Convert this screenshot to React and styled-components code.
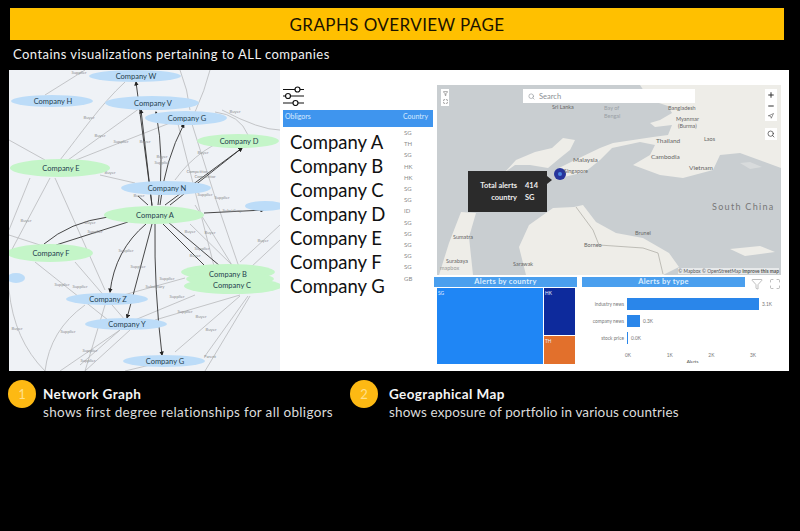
import React from 'react';
import styled, { createGlobalStyle } from 'styled-components';
import { Search, Plus, Minus, Navigation, Filter, Maximize } from 'lucide-react';

const GlobalStyle = createGlobalStyle`
  html, body { margin: 0; padding: 0; background: #000; }
  body { font-family: 'Lato', 'Liberation Sans', sans-serif; }
`;

const Page = styled.div`
  width: 800px;
  height: 531px;
  background: #000;
  overflow: hidden;
  padding: 8px 11px 0 9px;
  box-sizing: border-box;
`;

const Banner = styled.h1`
  margin: 0 5px 0 1px;
  height: 32px;
  background: #ffc000;
  color: #1a1300;
  font-size: 17px;
  font-weight: 400;
  line-height: 33px;
  text-align: center;
  letter-spacing: 0.4px;
`;

const Subtitle = styled.p`
  margin: 0;
  height: 30px;
  padding-left: 4px;
  color: #f2f2f2;
  font-size: 13px;
  line-height: 28px;
  letter-spacing: 0.45px;
`;

const Panel = styled.section`
  display: flex;
  height: 301px;
  background: #fff;
`;

const GraphBox = styled.div`
  width: 271px;
  flex: none;
  background: #eff2f6;
  svg { display: block; }
`;

const Obligors = styled.div`
  width: 156px;
  flex: none;
  padding: 16px 3px 0;
  box-sizing: border-box;
  > svg { display: block; }
`;

const TableHead = styled.div`
  display: flex;
  justify-content: space-between;
  height: 16px;
  margin-top: 4px;
  padding: 1px 5px 0 2px;
  background: #3f95ee;
  color: #d8eaff;
  font-size: 7px;
  line-height: 10px;
`;

const TableBody = styled.div`
  display: flex;
  justify-content: space-between;
`;

const Names = styled.ul`
  list-style: none;
  margin: 3px 0 0;
  padding: 0 0 0 7px;
  color: #111;
  font-size: 18.5px;
  line-height: 24px;
`;

const Countries = styled.ul`
  list-style: none;
  width: 29px;
  margin: 0;
  padding: 0;
  color: #8a8a8a;
  font-size: 6px;
  line-height: 11.2px;
`;

const Dash = styled.div`
  flex: 1;
  display: flex;
  flex-direction: column;
  padding: 15px 8px 0 0;
  min-width: 0;
`;

const MapBox = styled.div`
  position: relative;
  flex: none;
  height: 190px;
  margin-left: 1px;
  overflow: hidden;
  background: #c9ced1;
  svg.map { display: block; }
`;

const SearchBar = styled.div`
  position: absolute;
  left: 86px;
  top: 4px;
  width: 172px;
  height: 14px;
  display: flex;
  align-items: center;
  gap: 4px;
  padding-left: 5px;
  box-sizing: border-box;
  background: #fff;
  color: #8a8f94;
  font-size: 7.5px;
`;

const MapControls = styled.div`
  position: absolute;
  top: ${p => p.$top}px;
  ${p => (p.$side === 'left' ? 'left: 4px;' : 'right: 4px;')}
  width: ${p => p.$w}px;
  display: flex;
  flex-direction: column;
  align-items: center;
  gap: 3px;
  padding: 2px 0;
  background: #fff;
  color: #333;
`;

const Tip = styled.div`
  position: absolute;
  left: 31px;
  top: 86px;
  width: 79px;
  height: 41px;
  display: grid;
  grid-template-columns: 49px 1fr;
  column-gap: 8px;
  align-content: center;
  background: #2b2b2b;
  color: #eee;
  font-size: 7.5px;
  font-weight: 700;
  line-height: 11.5px;
  &::after {
    content: '';
    position: absolute;
    right: -5px;
    top: 5px;
    border-left: 5px solid #2b2b2b;
    border-top: 4px solid transparent;
    border-bottom: 4px solid transparent;
  }
`;

const TipKey = styled.span`
  text-align: right;
`;

const Attribution = styled.span`
  position: absolute;
  right: 2px;
  bottom: 1px;
  color: #555;
  font-size: 4.8px;
  background: rgba(255, 255, 255, 0.55);
`;

const MapLabel = styled.span`
  position: absolute;
  left: ${p => p.$x}px;
  top: ${p => p.$y}px;
  color: ${p => p.$color || '#666'};
  font-size: ${p => p.$size || 5.5}px;
  letter-spacing: ${p => p.$track || 0}px;
  white-space: nowrap;
`;

const Charts = styled.div`
  display: grid;
  grid-template-columns: 143px 1fr;
  column-gap: 5px;
  margin: 2px 0 0 -2px;
`;

const ChartHead = styled.div`
  height: 10px;
  background: #4a9fee;
  color: #dceeff;
  font-size: 7.5px;
  font-weight: 700;
  line-height: 10px;
  text-align: center;
  letter-spacing: 0.3px;
`;

const TypeHeadRow = styled.div`
  display: flex;
  align-items: flex-start;
  gap: 6px;
  height: 10px;
  color: #7c7c7c;
  ${ChartHead} { flex: 1; }
  svg { flex: none; margin-top: 1px; }
`;

const Treemap = styled.div`
  display: grid;
  grid-template-columns: 106px 31px;
  grid-template-rows: 47px 28px;
  gap: 1px;
  margin: 1px 0 0 3px;
  color: #e6efff;
  font-size: 4.8px;
`;

const Tile = styled.div`
  background: ${p => p.$bg};
  padding: 2px 1px;
  grid-row: ${p => p.$rows || 'auto'};
`;

const BarChart = styled.div`
  position: relative;
  margin-top: 1px;
  padding: 10px 0 0 45px;
  color: #777;
  font-size: 4.8px;
`;

const BarRow = styled.div`
  display: flex;
  align-items: center;
  gap: 3px;
  height: 12px;
  margin-bottom: 5px;
`;

const BarLabel = styled.span`
  position: absolute;
  left: 8px;
  width: 34px;
  text-align: right;
`;

const Bar = styled.div`
  height: 12px;
  background: #2a86ea;
`;

const Axis = styled.div`
  display: flex;
  justify-content: space-between;
  width: 131px;
  margin: 8px 0 0 -2px;
`;

const AxisTitle = styled.div`
  width: 131px;
  margin-top: 1px;
  text-align: center;
  color: #444;
  font-size: 4.5px;
`;

const Legend = styled.div`
  display: flex;
  padding-top: 9px;
  margin-left: -1px;
`;

const LegendItem = styled.div`
  display: flex;
  width: ${p => p.$w}px;
  gap: ${p => p.$gap}px;
`;

const Badge = styled.div`
  width: 28px;
  height: 28px;
  flex: none;
  border-radius: 50%;
  background: #fdb913;
  color: #ffe08a;
  font-size: 13px;
  line-height: 28px;
  text-align: center;
`;

const LegendCopy = styled.div`
  padding-top: 6px;
`;

const LegendTitle = styled.div`
  color: #f5f5f5;
  font-size: 13.5px;
  font-weight: 700;
  line-height: 17px;
  letter-spacing: 0.4px;
`;

const LegendText = styled.div`
  color: #dcdcdc;
  font-size: 13.5px;
  line-height: 18px;
  letter-spacing: ${p => p.$track}px;
  white-space: nowrap;
`;

const BLUE = '#bcdcf8';
const GREEN = '#c4f5c8';

const nodes = [
  { name: 'Company W', x: 135, y: 76, rx: 46, ry: 6, fill: BLUE },
  { name: 'Company H', x: 52, y: 101, rx: 41, ry: 6, fill: BLUE },
  { name: 'Company V', x: 152, y: 103, rx: 47, ry: 7, fill: BLUE },
  { name: 'Company G', x: 186, y: 118, rx: 41, ry: 7, fill: BLUE },
  { name: 'Company D', x: 238, y: 141, rx: 41, ry: 7, fill: GREEN },
  { name: 'Company E', x: 60, y: 168, rx: 50, ry: 9, fill: GREEN },
  { name: 'Company N', x: 166, y: 188, rx: 45, ry: 7, fill: BLUE },
  { name: 'Company A', x: 154, y: 215, rx: 50, ry: 9, fill: GREEN },
  { name: 'Company F', x: 50, y: 253, rx: 43, ry: 9, fill: GREEN },
  { name: 'Company Z', x: 107, y: 299, rx: 41, ry: 6, fill: BLUE },
  { name: 'Company Y', x: 126, y: 324, rx: 41, ry: 6, fill: BLUE },
  { name: 'Company G', x: 164, y: 361, rx: 41, ry: 6, fill: BLUE },
];

const lightEdges = [
  'M85 70 L45 95', 'M125 82 C100 105 80 135 60 160', 'M140 108 L68 160', 'M170 123 L76 160',
  'M180 70 Q188 90 190 110', 'M210 70 Q205 90 195 112', 'M192 124 Q215 200 240 270', 'M178 124 L215 270',
  'M9 140 L45 160', 'M50 178 L9 255', 'M55 178 L105 290', 'M100 175 L135 183', 'M175 180 Q200 145 240 135',
  'M215 112 Q240 115 248 135', 'M222 110 Q260 130 280 130', 'M190 224 L232 265', 'M195 205 L235 270',
  'M280 225 L240 262', 'M280 240 L250 268', 'M248 296 L205 356', 'M240 296 L175 352', 'M250 296 L205 371',
  'M185 278 L120 296', 'M195 295 L130 322', 'M240 295 L155 320', 'M35 262 L108 320', 'M75 262 L125 320',
  'M85 305 Q50 330 45 371', 'M105 305 L85 371', 'M120 330 L80 365', 'M120 330 L60 371', 'M130 330 L85 371',
  'M9 290 Q14 340 45 371', 'M30 178 L9 230', 'M150 365 L125 371', 'M9 235 L40 245',
];

const darkEdges = [
  { d: 'M152 205 L136 82', arrow: true }, { d: 'M152 206 L141 110', arrow: true },
  { d: 'M158 205 Q165 160 156 112', arrow: true }, { d: 'M160 205 Q165 160 184 124', arrow: true },
  { d: 'M165 205 L242 148', arrow: true }, { d: 'M170 205 L242 148', arrow: true },
  { d: 'M108 217 Q70 222 44 244' }, { d: 'M128 222 L56 245' },
  { d: 'M146 224 Q115 250 110 292', arrow: true }, { d: 'M152 224 L127 318', arrow: true },
  { d: 'M155 224 Q154 290 162 355', arrow: true }, { d: 'M163 224 L207 268' },
  { d: 'M168 222 L220 266' }, { d: 'M204 213 L264 210', arrow: true }, { d: 'M148 205 L138 196' },
];

const edgeLabels = [
  ['Supplier', 79, 74], ['Buyer', 89, 119], ['Buyer', 100, 137], ['Supplier', 121, 143], ['Buyer', 145, 143],
  ['Buyer', 235, 113], ['Buyer', 203, 154], ['Buyer', 162, 158], ['Supplier', 162, 164], ['Competitor', 197, 173],
  ['Competitor', 205, 178], ['Buyer', 110, 174], ['Buyer', 139, 197], ['Supplier', 205, 196], ['Supplier', 222, 199],
  ['Subsidiary', 232, 212], ['Buyer', 26, 222], ['Buyer', 90, 224], ['Supplier', 95, 233], ['Buyer', 190, 233],
  ['Buyer', 210, 234], ['Buyer', 263, 242], ['Supplier', 202, 250], ['Supplier', 126, 252], ['Buyer', 195, 257],
  ['Supplier', 138, 268], ['Supplier', 167, 280], ['Subsidiary', 155, 288], ['Supplier', 62, 286], ['Supplier', 80, 288],
  ['Supplier', 177, 298], ['Supplier', 185, 313], ['Buyer', 201, 318], ['Buyer', 211, 331], ['Buyer', 17, 330],
  ['Supplier', 68, 333], ['Supplier', 90, 352], ['Supplier', 88, 362], ['Parent', 210, 358],
];

const NetworkGraph = () => (
  <svg width="271" height="301" viewBox="9 70 271 301">
    <defs>
      <marker id="tip" markerWidth="5" markerHeight="5" refX="4" refY="2.5" orient="auto">
        <path d="M0 0 L5 2.5 L0 5 Z" fill="#222" />
      </marker>
    </defs>
    {lightEdges.map(d => <path key={d} d={d} fill="none" stroke="#b7b9bb" strokeWidth="0.8" />)}
    {darkEdges.map(e => (
      <path key={e.d} d={e.d} fill="none" stroke="#333" strokeWidth="0.9" markerEnd={e.arrow ? 'url(#tip)' : undefined} />
    ))}
    {edgeLabels.map(([t, x, y], i) => (
      <text key={i} x={x} y={y} fontSize="4.2" fill="#8b8d8f" textAnchor="middle" fontFamily="Lato, sans-serif">{t}</text>
    ))}
    <ellipse cx="265" cy="206" rx="20" ry="5" fill={BLUE} />
    <ellipse cx="16" cy="278" rx="9" ry="5" fill={BLUE} />
    <ellipse cx="228" cy="272" rx="47" ry="8" fill={GREEN} />
    <ellipse cx="233" cy="286" rx="49" ry="8" fill={GREEN} />
    <ellipse cx="230" cy="279" rx="44" ry="7" fill={GREEN} />
    <text x="228" y="277" fontSize="7.5" fill="#24414f" textAnchor="middle" fontFamily="Lato, sans-serif">Company B</text>
    <text x="232" y="288" fontSize="7.5" fill="#24414f" textAnchor="middle" fontFamily="Lato, sans-serif">Company C</text>
    {nodes.map(n => (
      <g key={n.name + n.y}>
        <ellipse cx={n.x} cy={n.y} rx={n.rx} ry={n.ry} fill={n.fill} />
        <text x={n.x + 1} y={n.y + 2.5} fontSize="7.5" fill="#24414f" textAnchor="middle" fontFamily="Lato, sans-serif">{n.name}</text>
      </g>
    ))}
  </svg>
);

const FilterLines = () => (
  <svg width="21" height="20" viewBox="0 0 21 20" fill="none" stroke="#111" strokeWidth="1.2">
    <path d="M0 3.5H12M17 3.5H21M0 10H2.5M7.5 10H21M0 17H10M15 17H21" />
    <circle cx="14.5" cy="3.5" r="2.5" />
    <circle cx="5" cy="10" r="2.5" />
    <circle cx="12.5" cy="17" r="2.5" />
  </svg>
);

const LAND = '#eeede8';

// map shapes in page pixels
const land = [
  '640,85 781,85 781,168 740,153 720,155 713,170 683,178 660,175 633,165 650,155 655,145 640,142 612,148 600,160 585,172 560,178 555,170 575,160 600,148 613,143 653,137 668,135 672,125 655,127 650,123 660,120 672,113 668,106 650,100',
  '575,140 570,150 560,158 548,168 530,165 515,165 505,172 516,160 535,152 552,148 563,138',
  '583,205 574,207 553,208 529,225 519,247 526,275 663,275 679,267 669,253 643,238 616,233 596,222',
  '461,212 476,213 469,237 473,275 439,275 449,243',
  '730,249 760,246 775,252 745,256',
];

const MapArt = () => (
  <svg className="map" width="344" height="190" viewBox="437 85 344 190">
    <rect x="437" y="85" width="344" height="190" fill="#c9ced1" />
    {land.map(p => <polygon key={p} points={p} fill={LAND} />)}
    <polygon points="740,163 750,162 762,167 750,169" fill="#d8dbdc" />
    <path d="M576 207 L593 230 L599 245 L643 248 L658 253 L663 274" fill="none" stroke="#a9a8a0" strokeWidth="0.7" />
    <circle cx="560" cy="174" r="6" fill="#26349b" />
    <circle cx="560" cy="174" r="2" fill="#4a86e0" />
  </svg>
);

const countries = ['SG', 'TH', 'SG', 'HK', 'HK', 'SG', 'SG', 'ID', 'SG', 'SG', 'SG', 'SG', 'SG', 'GB'];
const companies = ['A', 'B', 'C', 'D', 'E', 'F', 'G'];

const mapLabels = [
  { t: 'Bangladesh', x: 231, y: 20 },
  { t: 'Myanmar', x: 239, y: 31 },
  { t: '(Burma)', x: 241, y: 38 },
  { t: 'Thailand', x: 219, y: 52, size: 6.5 },
  { t: 'Laos', x: 267, y: 51 },
  { t: 'Cambodia', x: 214, y: 68, size: 6.5 },
  { t: 'Vietnam', x: 252, y: 79, size: 6.5 },
  { t: 'Malaysia', x: 136, y: 71, size: 6.5 },
  { t: 'Singapore', x: 127, y: 83 },
  { t: 'South China', x: 275, y: 116, size: 9, track: 1.3, color: '#777' },
  { t: 'Sri Lanka', x: 115, y: 19 },
  { t: 'Bay of', x: 167, y: 20, color: '#99a0a5' },
  { t: 'Bengal', x: 167, y: 28, color: '#99a0a5' },
  { t: 'Brunei', x: 198, y: 145 },
  { t: 'Borneo', x: 147, y: 157 },
  { t: 'Sumatra', x: 16, y: 149 },
  { t: 'Surabaya', x: 9, y: 173 },
  { t: 'Sarawak', x: 76, y: 176 },
  { t: 'mapbox', x: 3, y: 180, color: '#9a9a9a' },
];

const App = () => (
  <Page>
    <GlobalStyle />
    <Banner>GRAPHS OVERVIEW PAGE</Banner>
    <Subtitle>Contains visualizations pertaining to ALL companies</Subtitle>
    <Panel>
      <GraphBox>
        <NetworkGraph />
      </GraphBox>
      <Obligors>
        <FilterLines />
        <TableHead>
          <span>Obligors</span>
          <span>Country</span>
        </TableHead>
        <TableBody>
          <Names>
            {companies.map(c => <li key={c}>Company {c}</li>)}
          </Names>
          <Countries>
            {countries.map((c, i) => <li key={i}>{c}</li>)}
          </Countries>
        </TableBody>
      </Obligors>
      <Dash>
        <MapBox>
          <MapArt />
          {mapLabels.map(l => (
            <MapLabel key={l.t} $x={l.x} $y={l.y} $size={l.size} $track={l.track} $color={l.color}>{l.t}</MapLabel>
          ))}
          <SearchBar><Search size={7} />Search</SearchBar>
          <MapControls $top={4} $side="left" $w={8}>
            <Filter size={5} />
            <Maximize size={5} />
          </MapControls>
          <MapControls $top={4} $side="right" $w={12}>
            <Plus size={8} strokeWidth={3} />
            <Minus size={8} strokeWidth={3} />
            <Navigation size={6} />
          </MapControls>
          <MapControls $top={43} $side="right" $w={12}>
            <Search size={8} />
          </MapControls>
          <Tip>
            <TipKey>Total alerts</TipKey><span>414</span>
            <TipKey>country</TipKey><span>SG</span>
          </Tip>
          <Attribution>© Mapbox © OpenStreetMap <b>Improve this map</b></Attribution>
        </MapBox>
        <Charts>
          <div>
            <ChartHead>Alerts by country</ChartHead>
            <Treemap>
              <Tile $bg="#1f86f5" $rows="1 / span 2">SG</Tile>
              <Tile $bg="#0d2a9c">HK</Tile>
              <Tile $bg="#e2702c">TH</Tile>
            </Treemap>
          </div>
          <div>
            <TypeHeadRow>
              <ChartHead>Alerts by type</ChartHead>
              <Filter size={12} strokeWidth={1} />
              <Maximize size={12} strokeWidth={1} />
            </TypeHeadRow>
            <BarChart>
              <BarRow><BarLabel>industry news</BarLabel><Bar style={{ width: 132 }} />3.1K</BarRow>
              <BarRow><BarLabel>company news</BarLabel><Bar style={{ width: 13 }} />0.3K</BarRow>
              <BarRow><BarLabel>stock price</BarLabel><Bar style={{ width: 1 }} />0.0K</BarRow>
              <Axis><span>0K</span><span>1K</span><span>2K</span><span>3K</span></Axis>
              <AxisTitle>Alerts</AxisTitle>
            </BarChart>
          </div>
        </Charts>
      </Dash>
    </Panel>
    <Legend>
      <LegendItem $w={342} $gap={7}>
        <Badge>1</Badge>
        <LegendCopy>
          <LegendTitle>Network Graph</LegendTitle>
          <LegendText $track={0.33}>shows first degree relationships for all obligors</LegendText>
        </LegendCopy>
      </LegendItem>
      <LegendItem $w={400} $gap={11}>
        <Badge>2</Badge>
        <LegendCopy>
          <LegendTitle>Geographical Map</LegendTitle>
          <LegendText $track={0.13}>shows exposure of portfolio in various countries</LegendText>
        </LegendCopy>
      </LegendItem>
    </Legend>
  </Page>
);

export default App;
